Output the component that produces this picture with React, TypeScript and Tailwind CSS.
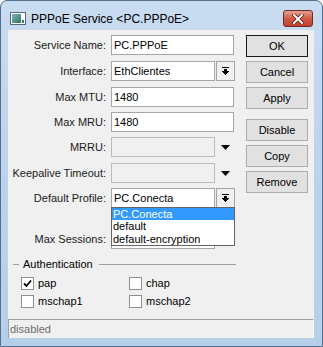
import React from "react";

const DropIcon = () => (
  <svg width="7" height="8" viewBox="0 0 7 8" shapeRendering="crispEdges">
    <rect x="0" y="0" width="7" height="1" fill="#000" />
    <rect x="2" y="2" width="3" height="2" fill="#000" />
    <polygon points="0,4 7,4 3.5,8" fill="#000" />
  </svg>
);

const Tri = () => (
  <svg width="9" height="5" viewBox="0 0 9 5">
    <polygon points="0,0 9,0 4.5,5" fill="#000" />
  </svg>
);

const Label = ({ children }: { children: React.ReactNode }) => (
  <div className="w-[98px] text-right leading-[20px] text-[11px] text-[#1a1a1a] whitespace-nowrap">{children}</div>
);

const Input = ({ value, w = "w-[104px]", disabled = false }: { value?: string; w?: string; disabled?: boolean }) => (
  <div
    className={`${w} h-[20px] border ${disabled ? "border-[#bcbcbc] bg-[#f0f0f0]" : "border-[#a5a5a5] bg-white"} pl-[2px] text-[11px] leading-[18px] text-black whitespace-nowrap overflow-hidden`}
  >
    {value}
  </div>
);

const DropBtn = () => (
  <div className="w-[19px] h-[20px] ml-[1px] border border-[#a5a5a5] bg-[#f0f0f0] flex items-center justify-center">
    <DropIcon />
  </div>
);

const Row = ({ label, children, className = "" }: { label: string; children: React.ReactNode; className?: string }) => (
  <div className={`flex items-center h-[20px] ${className}`}>
    <Label>{label}</Label>
    <div className="ml-[5px] flex items-center relative">{children}</div>
  </div>
);

const Btn = ({ children, def = false, className = "" }: { children: React.ReactNode; def?: boolean; className?: string }) => (
  <div
    className={`w-[62px] h-[22px] flex items-center justify-center text-[11px] text-black ${def ? "border border-[#1a1a1a] bg-[#e1e1e1]" : "border border-[#adadad] bg-[#e1e1e1]"} ${className}`}
  >
    {children}
  </div>
);

const Check = ({ checked = false, label }: { checked?: boolean; label: string }) => (
  <div className="flex items-center h-[13px] w-[108px]">
    <div className="w-[13px] h-[13px] border border-[#8e8f8f] bg-white flex items-center justify-center">
      {checked && (
        <svg width="9" height="9" viewBox="0 0 9 9">
          <path d="M1 4.5 L3.5 7 L8 1.5" stroke="#000" strokeWidth="1.8" fill="none" />
        </svg>
      )}
    </div>
    <span className="ml-[4px] text-[11px] text-black leading-[13px]">{label}</span>
  </div>
);

export default function App() {
  return (
    <div
      className="w-[323px] h-[347px] rounded-t-[7px] border border-[#53708f] bg-gradient-to-b from-[#c9dcf1] via-[#bcd3ec] to-[#b6cfe9] flex flex-col"
      style={{ fontFamily: "'Liberation Sans', Arial, sans-serif" }}
    >
      {/* Title bar */}
      <div className="h-[29px] flex items-start relative">
        <div className="mt-[11px] ml-[9px] w-[16px] h-[13px] border border-[#5a6a78] bg-white flex p-[1px]">
          <div className="w-[9px] h-full bg-gradient-to-br from-[#7fb0c8] to-[#2f7a4f]" />
          <div className="flex-1 flex items-end justify-end">
            <div className="w-[2px] h-[3px] bg-[#3a6d8f]" />
          </div>
        </div>
        <div className="mt-[10px] ml-[5px] text-[12px] leading-[16px] text-black">PPPoE Service &lt;PC.PPPoE&gt;</div>
        <div className="ml-auto mr-[9px] mt-[9px] w-[30px] h-[17px] rounded-[3px] border border-[#6e2a25] bg-gradient-to-b from-[#e5a091] via-[#cf5a47] to-[#c0402c] flex items-center justify-center">
          <svg width="12" height="10" viewBox="0 0 12 10">
            <path d="M2 1 L10 9 M10 1 L2 9" stroke="#5a1b14" strokeWidth="3.6" strokeLinecap="square" />
            <path d="M2 1 L10 9 M10 1 L2 9" stroke="#ffffff" strokeWidth="2" strokeLinecap="square" />
          </svg>
        </div>
      </div>

      {/* Client */}
      <div className="ml-[7px] w-[306px] h-[308px] bg-[#f0f0f0] flex flex-col">
        <div className="flex">
          {/* Form */}
          <div className="w-[238px] flex flex-col pt-[5px]">
            <Row label="Service Name:">
              <Input value="PC.PPPoE" w="w-[123px]" />
            </Row>
            <Row label="Interface:" className="mt-[6px]">
              <Input value="EthClientes" />
              <DropBtn />
            </Row>
            <Row label="Max MTU:" className="mt-[6px]">
              <Input value="1480" w="w-[123px]" />
            </Row>
            <Row label="Max MRU:" className="mt-[5px]">
              <Input value="1480" w="w-[123px]" />
            </Row>
            <Row label="MRRU:" className="mt-[5px]">
              <Input disabled />
              <div className="ml-[6px] flex items-center">
                <Tri />
              </div>
            </Row>
            <Row label="Keepalive Timeout:" className="mt-[6px]">
              <Input disabled />
              <div className="ml-[6px] flex items-center">
                <Tri />
              </div>
            </Row>
            <Row label="Default Profile:" className="mt-[5px]">
              <Input value="PC.Conecta" />
              <DropBtn />
            </Row>
            <Row label="Max Sessions:" className="mt-[21px] z-0">
              <Input />
            </Row>
            {/* Authentication group */}
            <div className="mt-[8px] ml-[5px] w-[223px] flex items-center h-[14px]">
              <div className="w-[6px] h-px bg-[#a0a0a0]" />
              <span className="ml-[4px] text-[11px] text-black leading-[14px]">Authentication</span>
              <div className="ml-[6px] flex-1 h-px bg-[#a0a0a0]" />
            </div>
            <div className="mt-[6px] ml-[13px] flex">
              <Check checked label="pap" />
              <Check label="chap" />
            </div>
            <div className="mt-[5px] ml-[13px] flex">
              <Check label="mschap1" />
              <Check label="mschap2" />
            </div>
          </div>
          {/* Buttons */}
          <div className="flex flex-col pt-[5px]">
            <Btn def>OK</Btn>
            <Btn className="mt-[4px]">Cancel</Btn>
            <Btn className="mt-[4px]">Apply</Btn>
            <Btn className="mt-[10px]">Disable</Btn>
            <Btn className="mt-[4px]">Copy</Btn>
            <Btn className="mt-[4px]">Remove</Btn>
          </div>
        </div>

        {/* Dropdown overlay */}
        <div className="relative">
          <div className="absolute left-[103px] top-[-101px] w-[124px] h-[39px] border border-[#646464] bg-white z-10 flex flex-col text-[11px] leading-[12.3px]">
            <div className="bg-[#3399ff] text-white pl-[1px]">PC.Conecta</div>
            <div className="text-black pl-[1px]">default</div>
            <div className="text-black pl-[1px]">default-encryption</div>
          </div>
        </div>

        {/* Status bar */}
        <div className="mt-auto h-[19px] border-t border-l border-[#a0a0a0] border-r border-r-white flex items-center pl-[1px] text-[11px] text-[#6d6d6d]">
          disabled
        </div>
      </div>
    </div>
  );
}
